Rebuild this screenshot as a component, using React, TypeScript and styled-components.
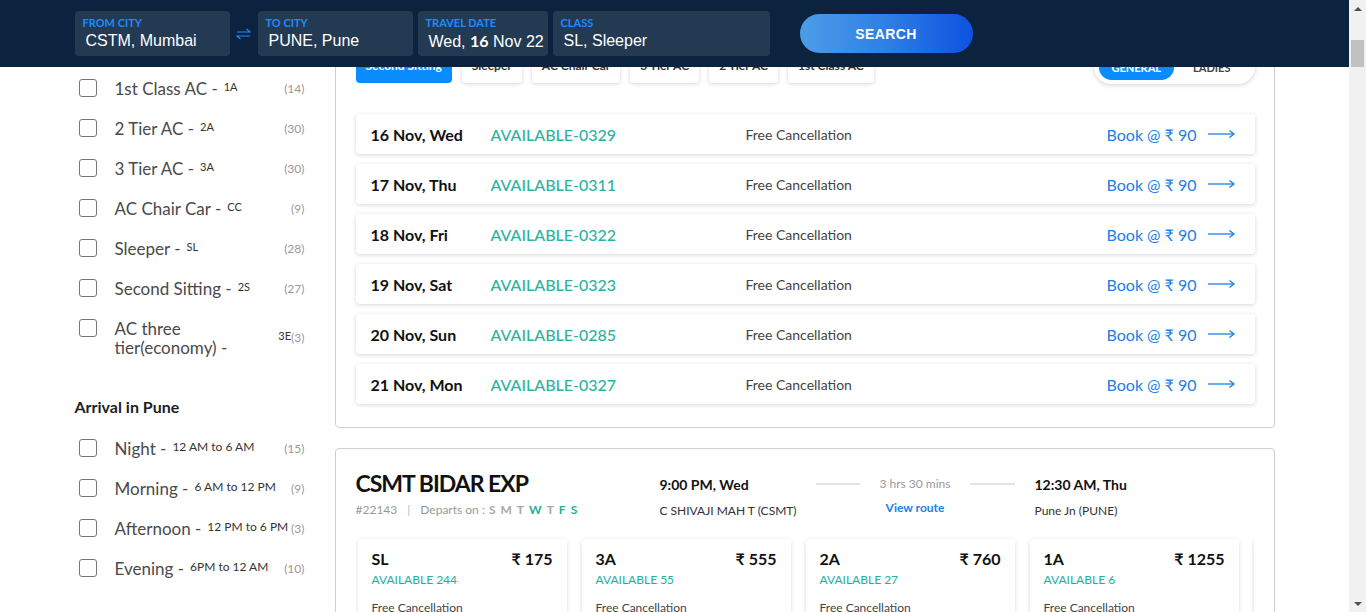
import React from "react";
import styled, { createGlobalStyle } from "styled-components";

const GlobalStyle = createGlobalStyle`
  body {
    margin: 0;
    padding-right: 17px;
    background: #ffffff;
    font-family: Lato, "Open Sans", Arial, sans-serif;
    color: #222;
  }
  * {
    box-sizing: border-box;
  }
`;

const ScrollRail = styled.div`
  position: fixed;
  top: 0;
  right: 0;
  bottom: 0;
  z-index: 20;
  width: 17px;
  display: flex;
  flex-direction: column;
  background: #f1f1f1;
`;
const RailArrow = styled.div<{ $down?: boolean }>`
  height: 17px;
  flex: none;
  display: flex;
  align-items: center;
  justify-content: center;

  &::before {
    content: "";
    border-left: 4px solid transparent;
    border-right: 4px solid transparent;
    ${({ $down }) => ($down ? "border-top: 4px solid #505050;" : "border-bottom: 4px solid #505050;")}
  }
`;
const RailTrack = styled.div`
  flex: 1;
  padding: 23px 2px 0;
`;
const RailThumb = styled.div`
  height: 27px;
  background: #c1c1c1;
`;

const HeaderBar = styled.header`
  position: fixed;
  top: 0;
  left: 0;
  right: 17px;
  z-index: 10;
  height: 67px;
  background-color: #0c2340;
`;
const HeaderInner = styled.div`
  max-width: 1200px;
  height: 100%;
  margin: 0 auto;
  display: flex;
  align-items: center;
`;
const Field = styled.div<{ $width: number; $gap?: number }>`
  width: ${({ $width }) => $width}px;
  height: 45px;
  margin-left: ${({ $gap }) => $gap ?? 0}px;
  padding: 5px 8px 4px;
  background-color: #243a52;
  border-radius: 4px;
  flex: none;
`;
const FieldLabel = styled.div`
  font-family: Lato, sans-serif;
  font-size: 11px;
  line-height: 14px;
  font-weight: 700;
  color: #1a8cff;
  text-transform: uppercase;
`;
const FieldValue = styled.div`
  font-family: "Liberation Sans", Arial, sans-serif;
  font-size: 16px;
  line-height: 22px;
  color: #ffffff;
  padding-left: 3px;
  white-space: nowrap;

  & b {
    font-family: Lato, sans-serif;
    font-weight: 700;
  }
`;
const SwapButton = styled.div`
  width: 28px;
  flex: none;
  display: flex;
  justify-content: center;
  color: #1a8cff;
`;
const SearchButton = styled.button`
  width: 173px;
  height: 39px;
  margin-left: 30px;
  border: none;
  border-radius: 20px;
  background: linear-gradient(90deg, #4c9de8 0%, #2f7fe6 50%, #0c52e0 100%);
  color: #ffffff;
  font-family: "Liberation Sans", Arial, sans-serif;
  font-size: 14px;
  font-weight: 700;
  letter-spacing: 0.4px;
  cursor: pointer;
`;

const Page = styled.div`
  max-width: 1200px;
  margin: 0 auto;
  padding: 40px 0 40px;
  display: flex;
  gap: 30px;
`;
const Sidebar = styled.aside`
  width: 230px;
  flex: none;
  padding-top: 28px;
`;
const FilterRow = styled.label`
  display: flex;
  align-items: center;
  padding: 10.5px 0;
`;
const Checkbox = styled.span`
  width: 18px;
  height: 18px;
  margin: 0.5px 18px 0 4px;
  border: 1.5px solid #767676;
  border-radius: 3px;
  align-self: flex-start;
  flex: none;
`;
const FilterName = styled.span`
  font-size: 17px;
  line-height: 19px;
  color: #4a4a4a;
`;
const FilterCode = styled.span<{ $small?: boolean }>`
  flex: none;
  margin-left: 6px;
  padding-bottom: 4px;
  font-size: ${({ $small }) => ($small ? 11 : 12)}px;
  color: #333;
`;
const FilterCount = styled.span`
  margin-left: auto;
  flex: none;
  font-size: 12px;
  color: #999;
`;
const FilterHeading = styled.h4`
  margin: 30px 0 11px;
  font-size: 16px;
  line-height: 20px;
  font-weight: 700;
  color: #1e1e1e;
`;

const Results = styled.main`
  flex: 1;
  min-width: 0;
  display: flex;
  flex-direction: column;
  gap: 20px;
`;
const Card = styled.section`
  min-width: 0;
  border: 1px solid #cfcfcf;
  border-radius: 4px;
  background: #ffffff;
`;
const AvailabilityCard = styled(Card)`
  padding: 9px 19px 23px 20px;
`;
const TabsRow = styled.div`
  display: flex;
  align-items: center;
  justify-content: space-between;
  height: 34px;
`;
const Tabs = styled.div`
  display: flex;
  gap: 10px;
`;
const Tab = styled.button<{ $active?: boolean }>`
  height: 32px;
  padding: 0 10px 4px;
  border: none;
  border-radius: 4px;
  font-family: Lato, sans-serif;
  font-size: 12px;
  font-weight: 700;
  background: ${({ $active }) => ($active ? "#0a8cff" : "#ffffff")};
  color: ${({ $active }) => ($active ? "#ffffff" : "#333")};
  box-shadow: ${({ $active }) => ($active ? "none" : "0 1px 4px rgba(0,0,0,0.16)")};
`;
const QuotaToggle = styled.div`
  width: 161px;
  height: 34px;
  padding: 4px 5px;
  display: flex;
  align-items: center;
  border-radius: 17px;
  background: #ffffff;
  box-shadow: 0 1px 5px rgba(0, 0, 0, 0.18);
`;
const QuotaOption = styled.span<{ $active?: boolean }>`
  height: 25px;
  flex: 1;
  display: flex;
  align-items: center;
  justify-content: center;
  border-radius: 13px;
  font-size: 11px;
  font-weight: 700;
  text-transform: uppercase;
  background: ${({ $active }) => ($active ? "#0a8cff" : "transparent")};
  color: ${({ $active }) => ($active ? "#ffffff" : "#444")};
`;
const DateList = styled.div`
  margin-top: 30px;
  display: flex;
  flex-direction: column;
  gap: 10px;
`;
const DateRow = styled.div`
  height: 40px;
  display: flex;
  align-items: center;
  padding: 0 20px 0 15px;
  border-radius: 4px;
  background: #ffffff;
  box-shadow: 0 1px 4px rgba(0, 0, 0, 0.16);
`;
const DateText = styled.span`
  width: 120px;
  font-size: 16px;
  font-weight: 700;
  color: #111;
`;
const Availability = styled.span`
  width: 255px;
  font-size: 16px;
  font-weight: 500;
  color: #2cb3a0;
`;
const Cancellation = styled.span`
  font-size: 14px;
  color: #444;
`;
const BookLink = styled.a`
  margin-left: auto;
  display: flex;
  align-items: center;
  gap: 11px;
  font-size: 16px;
  color: #1a7fe6;
  text-decoration: none;
  cursor: pointer;
`;

const TrainCard = styled(Card)`
  padding: 18px 20px 20px 20px;
`;
const TrainHead = styled.div`
  display: flex;
  align-items: flex-start;
`;
const NameBlock = styled.div`
  width: 304px;
  flex: none;
`;
const TrainName = styled.h3`
  margin: 0;
  font-size: 23px;
  line-height: 32px;
  font-weight: 700;
  letter-spacing: -1px;
  color: #111;
`;
const TrainMeta = styled.div`
  margin-top: 3px;
  font-size: 12px;
  line-height: 16px;
  color: #999;
  display: flex;
  align-items: center;
`;
const MetaDivider = styled.span`
  margin: 0 10px;
  color: #bbb;
`;
const DayList = styled.span`
  margin-left: 4px;
  display: flex;
  gap: 5px;
`;
const DayLetter = styled.span<{ $runs?: boolean }>`
  font-weight: 700;
  color: ${({ $runs }) => ($runs ? "#26ad9e" : "#a9a9a9")};
`;
const TimeBlock = styled.div<{ $width?: number }>`
  width: ${({ $width }) => ($width ? `${$width}px` : "auto")};
  flex: none;
  padding-top: 8px;
`;
const TimeText = styled.div`
  font-size: 14px;
  line-height: 20px;
  font-weight: 700;
  color: #111;
`;
const StationText = styled.div`
  margin-top: 8px;
  font-size: 12px;
  line-height: 16px;
  color: #333;
`;
const Duration = styled.div`
  width: 199px;
  flex: none;
  margin-right: 20px;
  padding-top: 7px;
  display: grid;
  grid-template-columns: 1fr auto 1fr;
  align-items: center;
  row-gap: 6px;
`;
const DurationLine = styled.span`
  height: 2px;
  background: #e3e3e3;
`;
const DurationText = styled.span`
  padding: 0 20px;
  font-size: 12px;
  line-height: 20px;
  color: #999;
`;
const RouteLink = styled.a`
  grid-column: 1 / 4;
  text-align: center;
  font-size: 12px;
  line-height: 16px;
  font-weight: 700;
  color: #1a7fe6;
  cursor: pointer;
`;
const FareStrip = styled.div`
  margin-top: 18px;
  padding: 2px 0 12px 2px;
  display: flex;
  gap: 15px;
  overflow: hidden;
`;
const FareBox = styled.div`
  width: 209px;
  flex: none;
  padding: 10px 14px 14px;
  border-radius: 4px;
  background: #ffffff;
  box-shadow: 0 1px 5px rgba(0, 0, 0, 0.14);
`;
const FareTop = styled.div`
  display: flex;
  justify-content: space-between;
  font-size: 16px;
  line-height: 20px;
  font-weight: 700;
  color: #111;
`;
const FareAvail = styled.div`
  margin-top: 3px;
  font-size: 12px;
  line-height: 16px;
  color: #26ad9e;
`;
const FareNote = styled.div`
  margin-top: 12px;
  font-size: 12px;
  line-height: 16px;
  color: #444;
`;

const classFilters = [
  { name: "1st Class AC -", code: "1A", count: 14 },
  { name: "2 Tier AC -", code: "2A", count: 30 },
  { name: "3 Tier AC -", code: "3A", count: 30 },
  { name: "AC Chair Car -", code: "CC", count: 9 },
  { name: "Sleeper -", code: "SL", count: 28 },
  { name: "Second Sitting -", code: "2S", count: 27 },
  { name: "AC three tier(economy) -", code: "3E", count: 3 },
];
const arrivalFilters = [
  { name: "Night -", code: "12 AM to 6 AM", count: 15 },
  { name: "Morning -", code: "6 AM to 12 PM", count: 9 },
  { name: "Afternoon -", code: "12 PM to 6 PM", count: 3 },
  { name: "Evening -", code: "6PM to 12 AM", count: 10 },
];
const classTabs = ["Second Sitting", "Sleeper", "AC Chair Car", "3 Tier AC", "2 Tier AC", "1st Class AC"];
const dates = [
  { day: "16 Nov, Wed", seats: "AVAILABLE-0329" },
  { day: "17 Nov, Thu", seats: "AVAILABLE-0311" },
  { day: "18 Nov, Fri", seats: "AVAILABLE-0322" },
  { day: "19 Nov, Sat", seats: "AVAILABLE-0323" },
  { day: "20 Nov, Sun", seats: "AVAILABLE-0285" },
  { day: "21 Nov, Mon", seats: "AVAILABLE-0327" },
];
const days = [
  { d: "S", runs: false },
  { d: "M", runs: false },
  { d: "T", runs: false },
  { d: "W", runs: true },
  { d: "T", runs: false },
  { d: "F", runs: true },
  { d: "S", runs: true },
];
const fares = [
  { cls: "SL", price: "175", seats: 244 },
  { cls: "3A", price: "555", seats: 55 },
  { cls: "2A", price: "760", seats: 27 },
  { cls: "1A", price: "1255", seats: 6 },
  { cls: "2S", price: "105", seats: 112 },
];
const trains = [
  {
    name: "CSMT BIDAR EXP",
    no: "22143",
    dep: "9:00 PM, Wed",
    from: "C SHIVAJI MAH T (CSMT)",
    arr: "12:30 AM, Thu",
    to: "Pune Jn (PUNE)",
    dur: "3 hrs 30 mins",
  },
];

function SwapIcon() {
  return (
    <svg width="15" height="12" viewBox="0 0 15 12" fill="none" stroke="currentColor" strokeWidth="1.2">
      <path d="M1 4H14L10.5 1" />
      <path d="M14 8H1L4.5 11" />
    </svg>
  );
}

function LongArrow() {
  return (
    <svg width="27" height="10" viewBox="0 0 27 10" fill="none" stroke="currentColor" strokeWidth="1.3">
      <path d="M0 5H26" />
      <path d="M21.5 1.5L26 5L21.5 8.5" />
    </svg>
  );
}

export default function App() {
  return (
    <>
      <GlobalStyle />
      <HeaderBar>
        <HeaderInner>
          <Field $width={155}>
            <FieldLabel>From City</FieldLabel>
            <FieldValue>CSTM, Mumbai</FieldValue>
          </Field>
          <SwapButton>
            <SwapIcon />
          </SwapButton>
          <Field $width={155}>
            <FieldLabel>To City</FieldLabel>
            <FieldValue>PUNE, Pune</FieldValue>
          </Field>
          <Field $width={130} $gap={5}>
            <FieldLabel>Travel Date</FieldLabel>
            <FieldValue>
              Wed, <b>16</b> Nov 22
            </FieldValue>
          </Field>
          <Field $width={217} $gap={5}>
            <FieldLabel>Class</FieldLabel>
            <FieldValue>SL, Sleeper</FieldValue>
          </Field>
          <SearchButton>SEARCH</SearchButton>
        </HeaderInner>
      </HeaderBar>

      <ScrollRail>
        <RailArrow />
        <RailTrack>
          <RailThumb />
        </RailTrack>
        <RailArrow $down />
      </ScrollRail>

      <Page>
        <Sidebar>
          {classFilters.map((f) => (
            <FilterRow key={f.code}>
              <Checkbox />
              <FilterName>{f.name}</FilterName>
              <FilterCode $small>{f.code}</FilterCode>
              <FilterCount>({f.count})</FilterCount>
            </FilterRow>
          ))}
          <FilterHeading>Arrival in Pune</FilterHeading>
          {arrivalFilters.map((f) => (
            <FilterRow key={f.name}>
              <Checkbox />
              <FilterName>{f.name}</FilterName>
              <FilterCode>{f.code}</FilterCode>
              <FilterCount>({f.count})</FilterCount>
            </FilterRow>
          ))}
        </Sidebar>

        <Results>
          <AvailabilityCard>
            <TabsRow>
              <Tabs>
                {classTabs.map((t, i) => (
                  <Tab key={t} $active={i === 0}>
                    {t}
                  </Tab>
                ))}
              </Tabs>
              <QuotaToggle>
                <QuotaOption $active>General</QuotaOption>
                <QuotaOption>Ladies</QuotaOption>
              </QuotaToggle>
            </TabsRow>
            <DateList>
              {dates.map((d) => (
                <DateRow key={d.day}>
                  <DateText>{d.day}</DateText>
                  <Availability>{d.seats}</Availability>
                  <Cancellation>Free Cancellation</Cancellation>
                  <BookLink>
                    Book @ ₹ 90
                    <LongArrow />
                  </BookLink>
                </DateRow>
              ))}
            </DateList>
          </AvailabilityCard>

          {trains.map((t) => (
            <TrainCard key={t.no}>
              <TrainHead>
                <NameBlock>
                  <TrainName>{t.name}</TrainName>
                  <TrainMeta>
                    <span>#{t.no}</span>
                    <MetaDivider>|</MetaDivider>
                    <span>Departs on :</span>
                    <DayList>
                      {days.map((d, i) => (
                        <DayLetter key={i} $runs={d.runs}>
                          {d.d}
                        </DayLetter>
                      ))}
                    </DayList>
                  </TrainMeta>
                </NameBlock>
                <TimeBlock $width={156}>
                  <TimeText>{t.dep}</TimeText>
                  <StationText>{t.from}</StationText>
                </TimeBlock>
                <Duration>
                  <DurationLine />
                  <DurationText>{t.dur}</DurationText>
                  <DurationLine />
                  <RouteLink>View route</RouteLink>
                </Duration>
                <TimeBlock>
                  <TimeText>{t.arr}</TimeText>
                  <StationText>{t.to}</StationText>
                </TimeBlock>
              </TrainHead>
              <FareStrip>
                {fares.map((f) => (
                  <FareBox key={f.cls}>
                    <FareTop>
                      <span>{f.cls}</span>
                      <span>₹ {f.price}</span>
                    </FareTop>
                    <FareAvail>AVAILABLE {f.seats}</FareAvail>
                    <FareNote>Free Cancellation</FareNote>
                  </FareBox>
                ))}
              </FareStrip>
            </TrainCard>
          ))}
        </Results>
      </Page>
    </>
  );
}
